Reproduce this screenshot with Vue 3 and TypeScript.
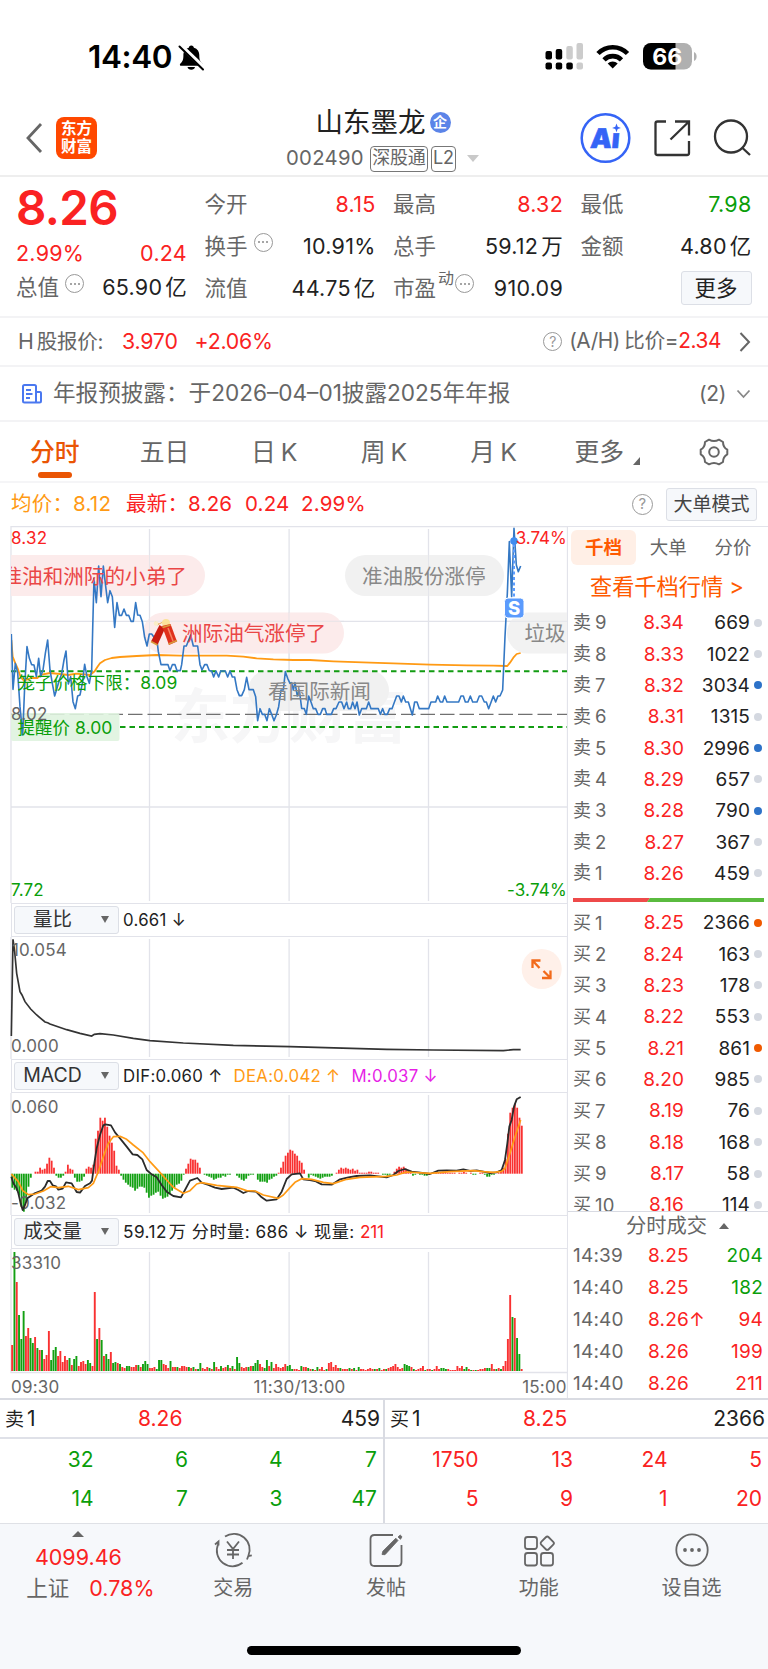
<script setup lang="ts">
interface Level { name: string; price: string; vol: number; dot: string }
interface Trade { time: string; price: string; vol: number; tone: string }

const level = (side: string) => (row: [number, string, number, string?]): Level => ({
  name: side + row[0], price: row[1], vol: row[2], dot: row[3] ?? 'grey',
})
const asks: Level[] = ([
  [9, '8.34', 669], [8, '8.33', 1022], [7, '8.32', 3034, 'blue'], [6, '8.31', 1315],
  [5, '8.30', 2996, 'blue'], [4, '8.29', 657], [3, '8.28', 790, 'blue'], [2, '8.27', 367], [1, '8.26', 459],
] as [number, string, number, string?][]).map(level('卖'))
const bids: Level[] = ([
  [1, '8.25', 2366, 'orange'], [2, '8.24', 163], [3, '8.23', 178], [4, '8.22', 553], [5, '8.21', 861, 'orange'],
  [6, '8.20', 985], [7, '8.19', 76], [8, '8.18', 168], [9, '8.17', 58], [10, '8.16', 114],
] as [number, string, number, string?][]).map(level('买'))
const trades: Trade[] = [
  { time: '14:39', price: '8.25', vol: 204, tone: 'green' },
  { time: '14:40', price: '8.25', vol: 182, tone: 'green' },
  { time: '14:40', price: '8.26↑', vol: 94, tone: 'red' },
  { time: '14:40', price: '8.26', vol: 199, tone: 'red' },
  { time: '14:40', price: '8.26', vol: 211, tone: 'red' },
]
const queues = [
  { side: '卖1', price: '8.26', vol: 459, tone: 'green', lots: [32, 6, 4, 7, 14, 7, 3, 47] },
  { side: '买1', price: '8.25', vol: 2366, tone: 'red', lots: [1750, 13, 24, 5, 5, 9, 1, 20] },
]
const gridX = [149.5, 289.1, 428.5]

const priceLine = '34,342 39,508 46,430 53,458 60,560 68,645 74,500 81,380 88,415 95,434 102,435 109,470 116,415 122,470 129,450 136,400 143,360 150,450 157,490 164,528 171,505 178,480 185,462 192,420 198,393 205,492 212,470 219,545 226,566 233,528 240,525 247,490 254,433 261,470 268,490 275,450 278,330 282,175 289,248 296,138 303,230 310,138 316,190 323,248 330,212 337,230 344,322 351,248 358,286 365,286 372,267 379,286 386,286 393,304 400,304 407,248 413,285 420,286 427,305 434,352 441,378 448,342 455,342 462,352 469,345 475,395 483,434 504,434 510,452 517,434 525,434 531,452 541,452 545,434 552,378 559,378 572,345 580,378 593,378 600,434 606,450 614,434 621,434 628,452 635,453 641,471 648,453 656,471 662,453 676,453 683,471 690,453 697,471 704,471 711,509 718,527 725,527 733,509 740,472 747,509 760,509 767,530 773,602 780,566 787,583 794,583 801,602 808,566 815,583 822,602 829,585 836,560 843,510 850,510 856,455 863,475 870,490 875,488 880,510 885,488 892,528 898,510 905,565 913,566 919,583 926,528 933,546 940,566 947,566 954,583 961,583 968,566 975,566 980,583 994,583 1001,566 1008,566 1017,546 1025,546 1032,566 1040,546 1045,566 1052,566 1058,546 1065,566 1071,546 1078,585 1085,566 1099,566 1106,546 1113,566 1135,566 1141,583 1148,566 1154,583 1162,583 1169,566 1176,566 1190,528 1197,528 1204,546 1210,528 1217,546 1225,546 1237,585 1244,546 1251,546 1258,566 1286,566 1293,546 1307,546 1313,528 1321,546 1328,546 1334,528 1341,546 1376,546 1383,528 1390,528 1396,546 1404,546 1411,528 1418,546 1431,546 1438,528 1445,528 1453,546 1459,546 1466,566 1480,528 1487,546 1494,528 1500,528 1508,510 1515,350 1522,220 1528,65 1535,230 1542,25 1549,135 1555,155 1562,138'
const avgLine = '34,360 38,410 46,430 53,445 62,472 72,482 82,478 95,474 112,474 125,464 150,459 180,462 205,465 228,461 270,465 284,454 292,441 300,430 315,420 335,414 360,411 410,408 470,405 540,407 680,407 730,410 770,415 820,418 880,420 930,420 1000,424 1110,428 1180,430 1290,434 1400,436 1480,437 1522,438 1530,428 1540,413 1550,402 1562,399'
const ratioLine = '34,438 39,148 44,185 50,250 60,305 66,315 75,335 92,357 110,375 135,396 143,398 150,402 200,419 240,430 275,438 283,433 300,431 340,435 400,445 450,452 550,459 700,466 870,470 1160,478 1300,480 1510,482 1540,479 1562,479'
const difLine = '34,860 40,880 50,895 55,910 62,940 68,960 75,945 82,925 92,918 102,911 125,902 135,890 143,873 150,873 158,886 168,889 175,899 188,896 198,877 215,880 230,906 240,908 255,888 270,880 276,872 283,820 290,775 300,735 310,706 316,703 333,706 345,727 360,745 380,770 398,793 412,795 427,808 440,840 455,853 470,862 485,885 500,905 520,918 543,922 555,900 570,872 592,864 605,878 625,885 645,893 665,897 700,893 715,900 730,909 745,903 768,905 785,922 800,932 830,928 845,905 860,867 875,853 900,850 910,868 930,870 945,873 965,883 995,884 1020,868 1045,862 1070,858 1110,856 1160,862 1180,855 1195,843 1215,837 1235,845 1255,847 1290,852 1315,842 1340,841 1370,842 1390,838 1410,843 1430,841 1450,845 1470,849 1490,847 1505,840 1515,810 1522,760 1528,710 1535,690 1542,650 1550,628 1562,621'
const deaLine = '34,852 55,875 68,902 85,914 105,912 130,903 152,890 175,893 205,889 235,899 265,893 280,880 295,845 310,800 325,760 340,740 360,739 380,748 400,765 428,787 450,815 475,842 500,870 520,892 550,910 570,902 590,882 605,878 650,886 710,892 740,902 765,903 790,915 835,925 850,915 870,893 885,877 905,866 935,868 970,877 1000,881 1040,868 1080,862 1160,859 1190,855 1220,846 1290,850 1350,845 1420,842 1450,845 1480,847 1505,844 1515,835 1530,790 1545,740 1562,690'

// One value per minute; positive columns rise from the zero axis, negative ones hang from it.
const macd: number[] = [
  -14, -16, -17, -22, -33, -38, -28, -13, -4, 0, 2, 2, 6, 4, 5, 10, 16, 13, 6, -2, -4, -4, -2, 2, 9, 5, 4, -4, -8, -8, -7, -3,
  5, 7, 6, 9, 35, 43, 56, 53, 56, 47, 38, 31, 23, 8, 4, -2, -6, -9, -11, -13, -14, -17, -15, -13, -13, -14, -19, -24, -22,
  -21, -19, -18, -22, -25, -24, -23, -20, -17, -14, -11, -10, -7, -1, 5, 10, 15, 14, 14, 11, 6, 0, -1, -2, -3, -4, -6, -5, -4,
  -4, -2, -3, -1, -1, 0, 0, -2, -4, -6, -7, -5, -2, -1, -1, 0, -6, -8, -8, -8, -9, -6, -5, -3, -2, 1, 6, 12, 18, 21, 24, 23,
  20, 18, 13, 11, 4, 0, -4, -1, -2, -3, -4, -5, -4, -3, -3, -3, -2, 0, 1, 4, 6, 5, 6, 5, 4, 5, 3, 4, 1, 1, 1, 1, 2, 2, 1, 1,
  1, 0, -1, -1, -2, -1, 0, 2, 5, 7, 6, 7, 5, 3, 1, -2, -1, 0, -1, -1, -2, -2, -1, 0, 0, 1, 1, 1, 2, 2, 1, 1, 1, 1, 0, 1, 1, 2,
  1, 0, 1, -1, -1, 0, 1, 1, -1, -3, -3, -1, -1, 0, 1, 3, 6, 15, 40, 61, 66, 70, 66, 56, 48,
]
const macdBars = macd.map((v, i) => ({
  x: 11.4 + i * 2.316 * (220 / (macd.length - 1)), y: v > 0 ? 1173.7 - v : 1173.7, h: Math.abs(v), up: v > 0,
}))

const volume = ('r26 g119 r89 g56 g32 g60 r35 r43 g33 g28 r34 g23 r21 g21 r12 r16 r40 g11 g21 g24 r15 r20 r9 r15 r11 g13 r6 g12 g15 r5 r9 r10 r7 g11 g8 r5 '
  + 'r79 g32 r43 g31 r15 g17 g12 r19 g8 g9 r8 g7 r4 r3 g5 g5 r4 r4 r6 g6 r4 g7 g10 g7 r3 r3 r4 g2 g11 g11 r7 r6 r3 g10 r4 r4 g4 r3 r5 r5 r4 g4 r3 g4 r2 g2 g8 r3 r2 r4 g3 r2 g9 r4 '
  + 'r2 g5 r3 r4 g6 r3 g5 r2 g14 g8 r4 r3 r4 g4 r5 g5 g8 g11 r7 r4 g3 g11 r5 g9 r3 r7 r4 r3 r4 r7 g5 g6 g2 r2 r2 r1 g5 r4 r4 g3 r2 g2 r1 g4 r2 r4 r1 g2 r8 r9 r4 r6 r3 g3 r2 r2 '
  + 'r2 g3 r2 g3 r1 g4 r2 r2 r1 r2 r3 r2 g2 r2 g3 r1 r2 g2 r3 r4 r5 r7 r4 r2 r3 g7 g6 g5 r4 g2 r1 r2 r3 r5 g1 r2 r2 g1 r2 r5 r2 g3 g3 g2 r2 r1 r1 r1 r5 r3 r5 g2 g4 r2 g1 r1 g1 r1 r2 r2 r3 g3 g3 r7 r2 g2 r3 g2 r5 r10 r32 r76 g54 r53 g33 g17 r2').split(' ')
const volumeBars = volume.map((s, i) => ({
  x: 11.2 + (i * 509.5) / (volume.length - 1), h: Number(s.slice(1)), up: s[0] === 'r',
}))
</script>

<template>
  <div class="page">
    <div class="status">
      <span class="clock">14:40</span>
      <svg class="bell" width="27" height="27" viewBox="0 0 27 27">
        <path d="M13.3 1.5c1.6 0 2.5 1 2.6 2.3 3.7 1 5.4 4 5.4 7.600 0 4.400.9 6.100 3.200 8.300.7.8.3 2.100-.9 2.100H3.100c-1.200 0-1.600-1.300-.9-2.100 2.300-2.200 3.200-3.900 3.200-8.300 0-3.600 1.700-6.600 5.400-7.600.1-1.300.9-2.300 2.500-2.300zM9.500 23h7.500c-.4 1.700-1.700 2.800-3.700 2.800S9.900 24.700 9.500 23z" />
        <path d="M2.500 1.500l24 23" stroke="#fff" stroke-width="4.500" />
        <path d="M1.500 2.500l23.500 23" stroke="#000" stroke-width="2" stroke-linecap="round" />
      </svg>
      <svg class="radio" width="154" height="30" viewBox="544 41 154 30">
        <g fill="#000">
          <rect x="545.500" y="51" width="6.500" height="8.500" rx="2" /><rect x="555.700" y="49" width="6.500" height="10.500" rx="2" />
          <rect x="545.500" y="62.500" width="6.500" height="7" rx="2" /><rect x="555.700" y="62.500" width="6.500" height="7" rx="2" /><rect x="566.300" y="62.500" width="6.500" height="7" rx="2" />
        </g>
        <g fill="#ccc">
          <rect x="566.300" y="46" width="6.500" height="13.500" rx="2" /><rect x="576.500" y="43" width="6.500" height="16.500" rx="2" /><rect x="576.500" y="62.500" width="6.500" height="7" rx="2" />
        </g>
        <g fill="none" stroke="#000" stroke-width="4.600">
          <path d="M598 53.500a20.500 20.500 0 0 1 29.500 0" /><path d="M604 59.800a12.300 12.300 0 0 1 17.500 0" />
        </g>
        <path d="M607.700 63.500a7.200 7.200 0 0 1 10 0l-5 5z" />
        <clipPath id="cell"><rect x="643" y="43" width="49" height="26.500" rx="8" /></clipPath>
        <g clip-path="url(#cell)"><rect x="643" y="43" width="49" height="27" fill="#b0b0b0" /><rect x="643" y="43" width="32.500" height="27" /></g>
        <path d="M694 52c3.500 1 3.500 8 0 9z" fill="#b0b0b0" />
        <text x="667.300" y="64.500" text-anchor="middle" font-size="23" font-weight="700" fill="#fff">66</text>
      </svg>
    </div>

    <header class="head">
      <svg class="back" width="18" height="34" viewBox="0 0 18 34"><path d="M16 3L3 17l13 14" fill="none" stroke="#666" stroke-width="2.800" /></svg>
      <div class="logo"><span>东方</span><span>财富</span></div>
      <div class="title">
        <div class="name">山东墨龙<i class="corp">企</i></div>
        <div class="code">002490<b>深股通</b><b class="l2">L2</b><i class="tri-down"></i></div>
      </div>
      <svg class="actions" width="178" height="54" viewBox="578 110 178 54">
        <circle cx="605.500" cy="137" r="23.800" fill="none" stroke="#3564f6" stroke-width="2.500" />
        <text x="590" y="147" font-size="27" font-weight="900" fill="#3564f6" stroke="#3564f6" stroke-width=".6" transform="skewX(-5) translate(12.500 0)">Aı</text>
        <path d="M616.500 122.500l1.200 3.200 3.200 1.200-3.200 1.200-1.200 3.200-1.200-3.200-3.200-1.200 3.200-1.200z" fill="#3564f6" />
        <g fill="none" stroke="#333" stroke-width="2.300">
          <path d="M666 120.500h-8.500q-2 0-2 2v29.500q0 2 2 2h29.500q2 0 2-2v-12M675 120.500h14v14M689 120.500l-18.500 18" />
          <circle cx="731" cy="135.500" r="16" /><path d="M742.500 147l7.500 7" />
        </g>
      </svg>
    </header>

    <section class="quote">
      <div class="qmain">
        <div class="last">8.26</div>
        <div class="pair red"><span>2.99%</span><span>0.24</span></div>
        <div class="pair cap"><label>总值<i class="info"></i></label><span>65.90<em>亿</em></span></div>
      </div>
      <div class="qcol">
        <p><label>今开</label><span class="red">8.15</span></p>
        <p><label>换手<i class="info"></i></label><span>10.91%</span></p>
        <p><label>流值</label><span>44.75<em>亿</em></span></p>
      </div>
      <div class="qcol">
        <p><label>最高</label><span class="red">8.32</span></p>
        <p><label>总手</label><span>59.12<em>万</em></span></p>
        <p><label>市盈<sup>动</sup><i class="info tight"></i></label><span>910.09</span></p>
      </div>
      <div class="qcol">
        <p><label>最低</label><span class="green">7.98</span></p>
        <p><label>金额</label><span>4.80<em>亿</em></span></p>
        <p><label></label><button class="more">更多</button></p>
      </div>
    </section>

    <div class="hshare">
      <span class="hl">H<em>股报价:</em></span><span class="red h1">3.970</span><span class="red">+2.06%</span>
      <i class="q">?</i><span class="ah">(A/H)<em>比价=</em><b class="red">2.34</b></span>
      <svg width="12" height="22" viewBox="0 0 12 22"><path d="M1.500 2l8.500 9-8.500 9" fill="none" stroke="#666" stroke-width="2" /></svg>
    </div>

    <div class="notice">
      <svg width="20" height="20" viewBox="0 0 20 20" fill="none" stroke="#4a78f0" stroke-width="2">
        <path d="M14 18.500H2.500q-1.500 0-1.500-1.500V2.500Q1 1 2.500 1h10Q14 1 14 2.500V18.500H17.500q1.500 0 1.500-1.500V9q0-1-1-1H14" /><path d="M4 6h5M4 10h6.500M4 14h4" />
      </svg>
      <span class="ntext">年报预披露：于2026–04–01披露2025年年报</span>
      <span class="count">(2)</span>
      <svg width="15" height="10" viewBox="0 0 15 10"><path d="M1.500 1.500l6 6.500 6-6.500" fill="none" stroke="#888" stroke-width="1.800" /></svg>
    </div>

    <nav class="tabs">
      <span class="on">分时</span><span>五日</span><span>日<em>K</em></span><span>周<em>K</em></span><span>月<em>K</em></span>
      <span class="tmore">更多<i></i></span>
      <svg width="30" height="30" viewBox="-15 -15 30 30" fill="none" stroke="#666" stroke-width="2">
        <path d="M-5 -12.300Q0 -9.500 5 -12.300L9 -10Q9 -4.600 13.300 -2.300V2.300Q9 4.600 9 10L5 12.300Q0 9.500 -5 12.300L-9 10Q-9 4.600 -13.300 2.300V-2.300Q-9 -4.600 -9 -10Z" stroke-linejoin="round" /><circle r="4.800" />
      </svg>
    </nav>

    <div class="brief">
      <span class="orange avg">均价：8.12</span><span class="red now">最新：8.26</span><span class="red chg">0.24</span><span class="red">2.99%</span>
      <i class="q">?</i><button class="mode">大单模式</button>
    </div>

    <main class="body">
      <div class="charts">
        <svg width="568" height="377" viewBox="0 526 568 377">
          <defs><clipPath id="plot"><rect x="11" y="526" width="556" height="377" /></clipPath></defs>
          <text x="171" y="738" font-size="59" font-weight="700" fill="#f6f6f7" textLength="236">东方财富</text>
          <g class="grid">
            <path d="M11 526.500H567.500V903M11 526V903M11 621.300H567M11 807H567" />
            <path v-for="x in gridX" :key="x" :d="`M${x} 529V901`" />
          </g>
          <g clip-path="url(#plot)">
            <g opacity=".93">
              <rect x="-40" y="555" width="245" height="41" rx="20.500" fill="#fceaea" /><rect x="143" y="612.500" width="201" height="41" rx="20.500" fill="#fceaea" />
              <g fill="#f1f1f1"><rect x="345" y="555" width="159" height="41" rx="20.500" /><rect x="507" y="612.500" width="100" height="41" rx="20.500" /><rect x="248" y="670" width="141" height="41" rx="20.500" /></g>
            </g>
            <path d="M149.500 555v98M289 612v99M428.500 555v41M507 621.300h60M143 621.300h201" stroke="#dfe1e8" stroke-width="1" opacity=".6" />
            <path d="M11 671.300H567" stroke="#129c12" stroke-width="2" stroke-dasharray="5.500 4" />
            <path d="M120 727H567" stroke="#129c12" stroke-width="2" stroke-dasharray="5.500 4" />
            <path d="M11 714.300H567" stroke="#707070" stroke-width="1.300" stroke-dasharray="14.500 5" />
            <rect x="11" y="713" width="108.500" height="28" rx="2" fill="#dff3df" opacity=".9" />
            <g transform="translate(0 520) scale(.33333)" fill="none" stroke-linejoin="round">
              <polyline :points="avgLine" stroke="#ff9a14" stroke-width="5.400" /><polyline :points="priceLine" stroke="#3478c4" stroke-width="4.800" />
            </g>
            <g class="bubble">
              <g fill="#ea4646"><text x="1.500" y="583.500">准油和洲际的小弟了</text><text x="182" y="641">洲际油气涨停了</text></g>
              <g fill="#888"><text x="362" y="583.500">准油股份涨停</text><text x="524.500" y="641">垃圾</text><text x="268" y="698.500">看国际新闻</text></g>
            </g>
            <g>
              <path d="M157 625l8-4 1.500 3M159 624l-4-2" stroke="#e8b060" stroke-width="1" fill="none" /><circle cx="166" cy="623" r="4" fill="#fbe29a" /><circle cx="156" cy="623.500" r="2.300" fill="#fbeec8" />
              <path d="M159.500 625l5.500 3.500-7.500 16.500-6.500-3.500z" fill="#c91a10" /><path d="M162 626l8.500-2 6.500 17.500-8 3.500z" fill="#e0301c" />
              <path d="M151 641.500l6.500 3.500M168.500 644l8.500-3.500M162.500 627.500l8-2.500" stroke="#d99a3c" stroke-width="1.800" /><path d="M168 628l5 13" stroke="#f58362" stroke-width="1.500" />
            </g>
            <path d="M514 544v54" stroke="#5b9cff" stroke-width="2" stroke-dasharray="3 2.500" /><circle cx="514" cy="541" r="3.800" fill="#3f8cf0" />
            <rect x="504.500" y="598" width="19.500" height="20" rx="3.500" fill="#5b9bfd" stroke="#fff" />
            <text x="514.200" y="614.800" font-size="18.500" font-weight="800" fill="#fff" text-anchor="middle">S</text>
          </g>
          <g class="ax">
            <text x="11" y="543.700" fill="#fa2222">8.32</text><text x="566.800" y="543.700" text-anchor="end" fill="#fa2222" textLength="51">3.74%</text>
            <text x="11" y="719.700">8.02</text>
            <g fill="#0a9e0a"><text x="11" y="896">7.72</text><text x="566.800" y="896" text-anchor="end">-3.74%</text><text x="17.500" y="688.500" font-size="17.500" textLength="160">笼子价格下限：8.09</text><text x="17.500" y="734" font-size="17.500" textLength="95">提醒价 8.00</text></g>
          </g>
        </svg>

        <div class="tool"><button>量比<i></i></button><span>0.661 ↓</span></div>
        <svg width="568" height="122" viewBox="0 937 568 122">
          <g class="grid"><path d="M11 937V1059M567.500 937V1059" /><path v-for="x in gridX" :key="x" :d="`M${x} 939V1057`" /></g>
          <polyline :points="ratioLine" transform="translate(0 890) scale(.33333)" fill="none" stroke="#333" stroke-width="5" />
          <g class="ax"><text x="12" y="956">10.054</text><text x="11" y="1052">0.000</text></g>
          <circle cx="541.700" cy="969" r="20" fill="#fff0e9" />
          <path d="M539.500 968l-7-7.500M532.500 968v-7.500h8M543.500 971l7 7M550.500 970.500v7.500h-8.500" fill="none" stroke="#f26a1b" stroke-width="2.300" />
        </svg>

        <div class="tool"><button>MACD<i></i></button><span>DIF:0.060 ↑</span><span class="orange dea">DEA:0.042 ↑</span><span class="pink">M:0.037 ↓</span></div>
        <svg width="568" height="122" viewBox="0 1093 568 122">
          <g class="grid"><path d="M11 1093V1215M567.500 1093V1215" /><path v-for="x in gridX" :key="x" :d="`M${x} 1095V1213`" /></g>
          <rect v-for="(b, i) in macdBars" :key="i" :x="b.x" :y="b.y" width="1.800" :height="b.h" :fill="b.up ? '#f93131' : '#12a012'" />
          <g class="ax"><text x="11" y="1112.500">0.060</text><text x="11" y="1208.500">-0.032</text></g>
          <g transform="translate(0 890) scale(.33333)" fill="none" stroke-linejoin="round"><polyline :points="difLine" stroke="#2b2b2b" stroke-width="5.400" /><polyline :points="deaLine" stroke="#ff9a14" stroke-width="5" /></g>
        </svg>

        <div class="tool"><button>成交量<i></i></button><span class="vt">59.12<em>万</em> 分时量: 686 ↓ 现量: <b class="red">211</b></span></div>
        <svg width="568" height="149" viewBox="0 1249 568 149">
          <g class="grid"><path d="M11 1249V1372.500H567M567.500 1249V1399" /><path v-for="x in gridX" :key="x" :d="`M${x} 1252V1371`" /></g>
          <rect v-for="(b, i) in volumeBars" :key="i" :x="b.x" :y="1371 - b.h" width="1.900" :height="b.h" :fill="b.up ? '#f93131' : '#12a012'" />
          <g class="ax"><text x="11" y="1269">33310</text><text x="11" y="1392.500">09:30</text><text x="299.500" y="1392.500" text-anchor="middle">11:30/13:00</text><text x="566.800" y="1392.500" text-anchor="end">15:00</text></g>
        </svg>
      </div>

      <aside class="book">
        <div class="btabs"><span class="on">千档</span><span>大单</span><span>分价</span></div>
        <div class="deep">查看千档行情 &gt;</div>
        <div v-for="r in asks" :key="r.name" class="lv"><label>{{ r.name[0] }}<em>{{ r.name.slice(1) }}</em></label><span class="red">{{ r.price }}</span><b>{{ r.vol }}</b><i :class="r.dot"></i></div>
        <svg class="ratio" width="191" height="4" viewBox="0 0 191 4"><path d="M0 0H77L74 4H0z" fill="#ee4a4a" /><path d="M77 0H191V4H74z" fill="#5abb3f" /></svg>
        <div class="bids">
          <div v-for="r in bids" :key="r.name" class="lv"><label>{{ r.name[0] }}<em>{{ r.name.slice(1) }}</em></label><span class="red">{{ r.price }}</span><b>{{ r.vol }}</b><i :class="r.dot"></i></div>
        </div>
        <div class="ticks">分时成交<i></i></div>
        <div v-for="(t, i) in trades" :key="i" class="tr"><span>{{ t.time }}</span><span class="red">{{ t.price }}</span><span :class="t.tone">{{ t.vol }}</span></div>
      </aside>
    </main>

    <section class="queues">
      <div v-for="q in queues" :key="q.side" class="queue">
        <div class="qh"><span><em>{{ q.side[0] }}</em>{{ q.side[1] }}</span><span class="red">{{ q.price }}</span><span>{{ q.vol }}</span></div>
        <div class="lots" :class="q.tone"><span v-for="(n, i) in q.lots" :key="i">{{ n }}</span></div>
      </div>
    </section>

    <footer class="foot">
      <div class="index"><i class="tri-up"></i><span class="red">4099.46</span><div>上证<span class="red">0.78%</span></div></div>
      <div class="act">
        <svg width="38" height="36" viewBox="-19 -18 38 36"><path d="M-8 -13.500A15.800 15.800 0 0 1 15.300 6M14 9.500l1.300-3.500 3.500-.7M9.500 12.800A15.800 15.800 0 0 1 -14.800 -6M-18 -5.500l3.500-3v4M-6 -8.500L0 -1l6-7.500M0 -1V9M-6 0H6M-6 4.500H6" /></svg>交易
      </div>
      <div class="act">
        <svg width="38" height="36" viewBox="-19 -18 38 36"><path d="M7 -15H-11.500Q-15.500 -15 -15.500 -11V12Q-15.500 16 -11.500 16H11.500Q15.500 16 15.500 12V-5" /><path d="M-4 4.500l3 .2L12 -9.500l-2.200-2.300-13 13zM12 -13l2.500 2.300 1.500-2.500-1.800-1.800z" fill="#666" stroke-width=".8" /></svg>发帖
      </div>
      <div class="act">
        <svg width="38" height="36" viewBox="-19 -18 38 36"><rect x="-14" y="-13" width="12" height="12" rx="2.500" /><rect x="-14" y="3" width="12" height="12.500" rx="2.500" /><rect x="2" y="3" width="12" height="12.500" rx="2.500" /><rect x="3" y="-12" width="10.500" height="10.500" rx="2" transform="rotate(45 8.250 -6.750)" /></svg>功能
      </div>
      <div class="act">
        <svg width="38" height="36" viewBox="-19 -18 38 36"><circle r="15.700" /><g fill="#666" stroke="none"><circle cx="-7" r="1.900" /><circle r="1.900" /><circle cx="7" r="1.900" /></g></svg>设自选
      </div>
      <div class="home"></div>
    </footer>
  </div>
</template>

<style>
body { background: #fff; }
</style>

<style scoped>
* { box-sizing: border-box; }
.page { width: 768px; height: 1669px; overflow: hidden; background: #fff; color: #222; font-family: Inter, "Noto Sans CJK SC", sans-serif; font-size: 21.5px; line-height: 1; white-space: nowrap; }
i, em { font-style: normal; }
button { font-family: inherit; padding: 0; color: #333; background: #f6f8fb; border: 1px solid #dcdfe6; border-radius: 3px; line-height: 1; }
.red { color: #fa2222; }
.green { color: #0a9e0a; }
.orange { color: #ff9a14; }
.pink { color: #e61ee6; }

.status { height: 100px; display: flex; align-items: center; padding: 14px 70px 0 88px; }
.clock { font-size: 31.5px; font-weight: 600; color: #000; width: 90px; letter-spacing: -.4px; }
.bell { margin-top: 1px; }
.radio { margin-left: auto; margin-top: -2px; }

.head { height: 77px; display: flex; align-items: center; border-bottom: 2px solid #eee; padding-left: 25px; }
.back { margin-right: 13px; }
.logo { width: 41px; height: 42px; border-radius: 8px; background: #ff4800; color: #fff; font-size: 15.500px; font-weight: 700; display: flex; flex-direction: column; align-items: center; justify-content: center; gap: 2px; }
.title { width: 194px; margin-left: 189px; padding-top: 2px; }
.name { display: flex; align-items: center; justify-content: center; font-size: 27.500px; height: 40px; }
.corp { width: 21px; height: 21px; border-radius: 50%; background: #5b84e8; color: #fff; font-size: 14px; font-weight: 700; line-height: 20px; text-align: center; margin-left: 4px; }
.code { display: flex; align-items: center; font-size: 20.300px; color: #666; height: 32px; letter-spacing: .3px; }
.code b { font-weight: 400; font-size: 18px; border: 1.500px solid #777; border-radius: 4px; height: 26px; width: 58px; text-align: center; line-height: 22px; margin-left: 6px; letter-spacing: -.2px; }
.code .l2 { width: 25px; margin-left: 3px; }
.tri-down { border: 6px solid transparent; border-top: 7px solid #c9c9c9; border-bottom: 0; margin-left: 11px; }
.actions { margin-left: auto; margin-right: 12px; }

.quote { height: 141px; border-bottom: 2px solid #f3f3f5; display: grid; grid-template-columns: 171px 171px 170px 171px; column-gap: 17.500px; padding-left: 16px; letter-spacing: .25px; }
.quote label { color: #666; display: flex; align-items: center; letter-spacing: 0; }
.quote em { margin-left: 3px; }
.qmain { display: flex; flex-direction: column; }
.last { color: #fa2222; font-size: 47.500px; font-weight: 600; line-height: 62px; letter-spacing: -.6px; }
.pair { display: flex; justify-content: space-between; align-items: center; height: 29px; margin-bottom: 5px; }
.pair.cap { height: 30px; }
.qcol { padding-top: 7px; }
.qcol p { margin: 0; height: 41.800px; display: flex; justify-content: space-between; align-items: center; }
.info { width: 19px; height: 19px; border: 1.500px solid #999; border-radius: 50%; margin: -9px 0 0 6px; display: grid; place-items: center; }
.info::after { content: ""; width: 2px; height: 2px; border-radius: 50%; background: #888; box-shadow: -4px 0 #888, 4px 0 #888; }
.info.tight { margin-left: 1px; }
.quote sup { font-size: 16px; margin: -20px 0 0 2px; line-height: 1; }
.more { width: 71px; height: 34px; font-size: 21.500px; color: #222; }

.hshare { height: 49px; border-bottom: 2px solid #f3f3f5; display: flex; align-items: center; padding: 0 17px 0 18px; color: #666; font-size: 21.300px; letter-spacing: -.2px; }
.hl { width: 104px; }
.hl em { margin-left: 3px; font-size: 20.500px; }
.h1 { width: 72.500px; }
.q { width: 19px; height: 19px; border: 1.500px solid #999; border-radius: 50%; color: #999; font-size: 14px; line-height: 17px; text-align: center; margin-left: auto; }
.ah { margin: 0 18px 0 7px; font-size: 20.800px; letter-spacing: -.4px; }
.ah em { margin-left: 4px; }
.ah b { font-weight: 400; }

.notice { height: 55px; border-bottom: 2px solid #f3f3f5; display: flex; align-items: center; padding: 0 17px 0 22px; color: #666; font-size: 22.600px; }
.ntext { margin-left: 11px; }
.count { margin-left: auto; margin-right: 10px; font-size: 21px; letter-spacing: -.4px; }

.tabs { height: 61px; border-bottom: 2px solid #f5f5f7; display: flex; align-items: center; color: #666; font-size: 24.800px; }
.tabs span { width: 109.700px; text-align: center; position: relative; height: 60px; line-height: 60px; }
.tabs span em { margin-left: 5px; }
.tabs .on { color: #ea5504; font-weight: 500; }
.tabs .on::after { content: ""; position: absolute; left: 38px; top: 50px; width: 34px; height: 6px; border-radius: 3px; background: #ea5504; }
.tabs .tmore { padding-right: 8px; }
.tabs .tmore i { position: absolute; right: 18px; top: 35px; border-left: 7px solid transparent; border-bottom: 8px solid #666; }
.tabs svg { margin-left: 40.500px; }

.brief { height: 43px; display: flex; align-items: center; padding: 0 11px; font-size: 20.500px; letter-spacing: .2px; }
.avg { width: 115px; }
.now { width: 119px; }
.chg { width: 56px; }
.brief .q { width: 21px; height: 21px; line-height: 18px; font-size: 15px; }
.mode { width: 91px; height: 33px; margin-left: 13px; font-size: 19px; color: #444; }

.body { display: flex; height: 872px; }
.charts { width: 568px; display: flex; flex-direction: column; }
.charts svg { display: block; flex: none; }
.grid path { fill: none; stroke: #e2e3ea; stroke-width: 1.300; }
.ax { font-size: 17px; fill: #666; letter-spacing: .2px; }
.bubble { font-size: 20.600px; }
.tool { height: 34px; flex: none; margin-left: 11px; border: solid #e2e3ea; border-width: 1.500px 1.500px 1.500px 1px; display: flex; align-items: center; font-size: 16.800px; padding-left: 2px; letter-spacing: .3px; }
.tool button { width: 105px; height: 28px; font-size: 19.500px; margin-right: 4px; position: relative; padding-right: 28px; letter-spacing: 0; }
.tool button i { position: absolute; right: 9px; top: 9px; border: 4.500px solid transparent; border-top: 7px solid #666; border-bottom: 0; }
.dea { margin: 0 11px; }
.vt { font-size: 17.200px; letter-spacing: .45px; }
.vt em { margin-left: 2px; }
.vt b { font-weight: 400; letter-spacing: -.2px; }

.book { width: 200px; border-top: 1px solid #e2e3ea; padding-left: 3px; }
.btabs { height: 39px; display: flex; padding-top: 3px; font-size: 18.500px; color: #666; }
.btabs span { width: 64.800px; line-height: 35px; height: 35px; text-align: center; }
.btabs .on { background: #ffefe6; color: #ff5a00; font-weight: 700; border-radius: 6px; }
.deep { height: 41px; line-height: 42px; color: #ff5a00; font-size: 22.200px; text-align: center; padding-right: 5px; }
.lv { height: 31.350px; display: flex; align-items: center; padding-left: 2px; font-size: 19px; letter-spacing: .1px; }
.lv label { width: 49px; color: #666; font-size: 18px; display: flex; align-items: center; }
.lv label em { font-size: 18.500px; margin-left: 4px; }
.lv span { width: 62px; text-align: right; }
.lv b { width: 66px; text-align: right; font-weight: 400; }
.lv i { width: 8px; height: 8px; border-radius: 50%; margin-left: 3.500px; }
.lv .grey { background: #d4d8e0; }
.lv .blue { background: #2d72c8; }
.lv .orange { background: #f05a00; }
.ratio { display: block; margin: 9px 0 5px 1.500px; }
.bids { height: 305px; overflow: hidden; border-bottom: 1.500px solid #d8dae2; margin-left: -3px; padding-left: 3px; }
.ticks { height: 28px; display: flex; align-items: center; justify-content: center; color: #666; font-size: 20.300px; padding-left: 16px; }
.ticks i { border: 5px solid transparent; border-bottom: 6px solid #666; border-top: 0; margin-left: 12px; }
.tr { height: 31.800px; display: flex; align-items: center; padding: 0 5px 0 2px; font-size: 19px; letter-spacing: .2px; color: #666; }
.tr span:first-child { width: 75px; }
.tr span:last-child { margin-left: auto; }

.queues { height: 126px; display: flex; border-top: 2px solid #d9dbe2; border-bottom: 1px solid #dfe1e6; font-size: 21px; }
.queue { width: 383px; }
.queue + .queue { width: 385px; border-left: 2px solid #d9dbe2; }
.qh { height: 38.500px; border-bottom: 2px solid #dfe1e8; display: flex; align-items: center; padding: 0 3px 0 5px; }
.qh span:nth-child(1) { width: 133px; }
.qh span:nth-child(3) { margin-left: auto; }
.qh em { font-size: 19px; margin-right: 3px; }
.lots { display: grid; grid-template-columns: repeat(4, 94.500px); grid-auto-rows: 39px; align-items: center; text-align: right; padding-top: 1px; margin-left: -1px; }

.foot { height: 145px; background: #f6f8fb; display: flex; position: relative; color: #666; font-size: 20px; }
.index { width: 157px; display: flex; flex-direction: column; align-items: center; font-size: 21.500px; padding: 7px 0 0; }
.tri-up { border: 6px solid transparent; border-bottom: 6px solid #666; border-top: 0; }
.index > span { line-height: 24px; margin-top: 8px; }
.index div { line-height: 24px; margin-top: 7px; padding-left: 24px; }
.index div span { margin-left: 20px; }
.act { width: 153px; display: flex; flex-direction: column; align-items: center; padding-top: 8px; gap: 8px; line-height: 24px; }
.act svg { fill: none; stroke: #666; stroke-width: 1.800; }
.home { position: absolute; left: 247px; top: 122px; width: 274px; height: 9px; border-radius: 5px; background: #000; }
</style>
